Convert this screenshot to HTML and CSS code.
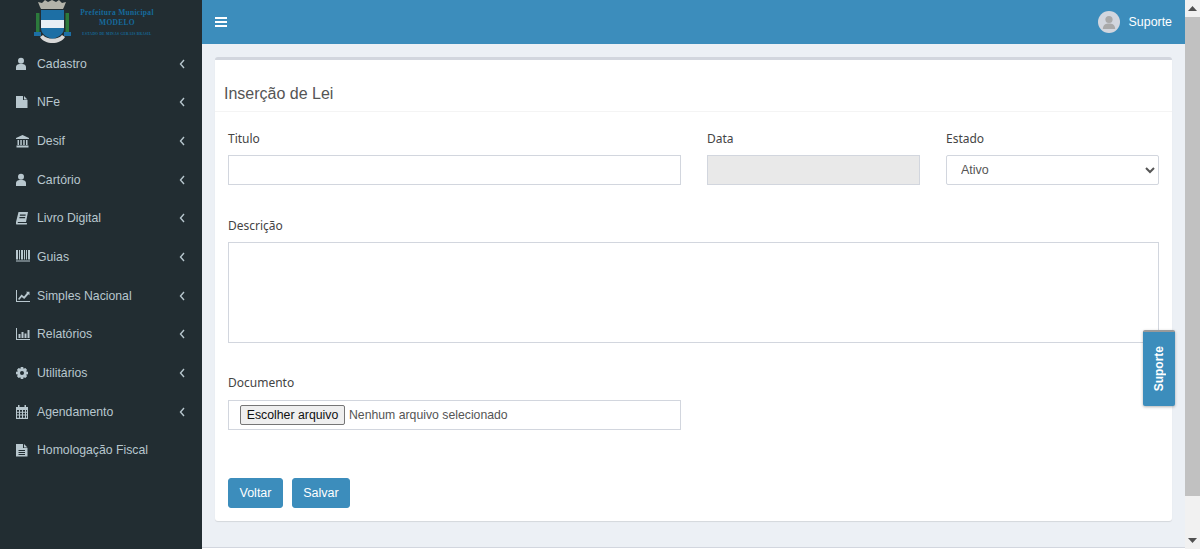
FILE: index.html
```html
<!DOCTYPE html>
<html lang="pt-BR">
<head>
<meta charset="utf-8">
<title>Inserção de Lei</title>
<link rel="stylesheet" href="styles.css">
</head>
<body>
<aside class="sidebar">
  <div class="logo">
    <svg class="crest" width="40" height="44" viewBox="0 0 40 44">
      <path d="M7 7 L5 2 L9 3 L12 0 L15 2 L19 0 L23 2 L26 0 L29 3 L33 2 L31 7 L30 9 H8 Z" fill="#b3b3aa"/>
      <path d="M3 13 h3.500 v19 h-3.500z M32.500 13 h3.500 v19 h-3.500z" fill="#2c7a3c"/>
      <path d="M1 32 h7 v4 h-7z M31 32 h7 v4 h-7z" fill="#1d6fa5"/>
      <path d="M8 10 H31 V28 C31 34 26 37 19.500 39 C13 37 8 34 8 28 Z" fill="#1d6fa5"/>
      <rect x="8" y="20" width="23" height="8" fill="#e8eef5"/>
      <path d="M7 37 C12 45 27 45 32 37 L29 35 C25 40 14 40 10 35 Z" fill="#d8d8d8"/>
    </svg>
    <div class="logo-text">
      <span class="logo-name">Prefeitura Municipal</span>
      <span class="logo-name">MODELO</span>
      <span class="logo-small">ESTADO DE MINAS GERAIS BRASIL</span>
    </div>
  </div>
  <nav class="menu">
    <a class="item"><svg class="ico" viewBox="1.500 0 14 14"><circle cx="6.500" cy="3.800" r="3"/><path d="M1.500 13 V10 C1.500 8 3.500 7 5 7 H8 C9.500 7 11.500 8 11.500 10 V13 Z"/></svg><span class="label">Cadastro</span><svg class="chev" viewBox="0 0 6 10"><path d="M5 1 L1.500 5 L5 9"/></svg></a>
    <a class="item"><svg class="ico" viewBox="0 0 14 14"><path d="M0 1 H7 V5 H11.500 V13 H0 Z M8 1 L11.500 4.500 H8 Z"/></svg><span class="label">NFe</span><svg class="chev" viewBox="0 0 6 10"><path d="M5 1 L1.500 5 L5 9"/></svg></a>
    <a class="item"><svg class="ico" viewBox="0 0 14 14"><path d="M6.500 1 L13 4 V5 H0 V4 Z M1.500 6 H3 V11 H1.500 Z M4.300 6 H5.800 V11 H4.300 Z M7.200 6 H8.700 V11 H7.200 Z M10 6 H11.500 V11 H10 Z M.5 11.500 H12.500 V13.500 H.5 Z"/></svg><span class="label">Desif</span><svg class="chev" viewBox="0 0 6 10"><path d="M5 1 L1.500 5 L5 9"/></svg></a>
    <a class="item"><svg class="ico" viewBox="1.500 0 14 14"><circle cx="6.500" cy="3.800" r="3"/><path d="M1.500 13 V10 C1.500 8 3.500 7 5 7 H8 C9.500 7 11.500 8 11.500 10 V13 Z"/></svg><span class="label">Cartório</span><svg class="chev" viewBox="0 0 6 10"><path d="M5 1 L1.500 5 L5 9"/></svg></a>
    <a class="item"><svg class="ico" viewBox="1 0 14 14"><path d="M3.500 1 H13 L11 11 H3 C2.500 11 2.500 12 3 12 H12 L11.800 13.500 H2 C1 13.500 .8 12.500 1 11 Z M5 3.500 L4.800 4.800 H10.500 L10.700 3.500 Z M4.500 6 L4.300 7.200 H10 L10.200 6 Z" fill-rule="evenodd"/></svg><span class="label">Livro Digital</span><svg class="chev" viewBox="0 0 6 10"><path d="M5 1 L1.500 5 L5 9"/></svg></a>
    <a class="item"><svg class="ico" viewBox="0 1.500 14 14"><path d="M0 0 H2 V11 H0 Z M3 0 H4 V11 H3 Z M5 0 H7 V11 H5 Z M8 0 H9 V11 H8 Z M10 0 H11 V11 H10 Z M12 0 H14 V11 H12 Z M0 12 H14 V13 H0 Z"/></svg><span class="label">Guias</span><svg class="chev" viewBox="0 0 6 10"><path d="M5 1 L1.500 5 L5 9"/></svg></a>
    <a class="item"><svg class="ico" viewBox="0 0 14 14"><path d="M0 1 H1 V12 H14 V13 H0 Z M2 10 L5.500 5.500 L8 7.500 L11 3.800 L10 2.800 H13.500 V6.300 L12.500 5.300 L8.200 10 L5.800 8 L3.200 11 Z"/></svg><span class="label">Simples Nacional</span><svg class="chev" viewBox="0 0 6 10"><path d="M5 1 L1.500 5 L5 9"/></svg></a>
    <a class="item"><svg class="ico" viewBox="0 0 14 14"><path d="M0 1 H1 V12 H14 V13 H0 Z M2.500 7 H4.500 V11 H2.500 Z M5.500 5 H7.500 V11 H5.500 Z M8.500 6.500 H10.500 V11 H8.500 Z M11.500 3 H13.500 V11 H11.500 Z"/></svg><span class="label">Relatórios</span><svg class="chev" viewBox="0 0 6 10"><path d="M5 1 L1.500 5 L5 9"/></svg></a>
    <a class="item"><svg class="ico" viewBox="1 0 14 14"><path fill-rule="evenodd" d="M5.800 1 H8.200 L8.600 2.800 L10.300 2 L12 3.700 L11.200 5.400 L13 5.800 V8.200 L11.200 8.600 L12 10.300 L10.300 12 L8.600 11.200 L8.200 13 H5.800 L5.400 11.200 L3.700 12 L2 10.300 L2.800 8.600 L1 8.200 V5.800 L2.800 5.400 L2 3.700 L3.700 2 L5.400 2.800 Z M7 5 A2 2 0 1 0 7 9 A2 2 0 1 0 7 5 Z"/></svg><span class="label">Utilitários</span><svg class="chev" viewBox="0 0 6 10"><path d="M5 1 L1.500 5 L5 9"/></svg></a>
    <a class="item"><svg class="ico" viewBox="1 0 14 14"><path fill-rule="evenodd" d="M3 0 H4.500 V2 H9.500 V0 H11 V2 H13 V14 H1 V2 H3 Z M2 5 V6.800 H4 V5 Z M5 5 V6.800 H7 V5 Z M8 5 V6.800 H10 V5 Z M11 5 V6.800 H12 V5 Z M2 7.800 V9.600 H4 V7.800 Z M5 7.800 V9.600 H7 V7.800 Z M8 7.800 V9.600 H10 V7.800 Z M11 7.800 V9.600 H12 V7.800 Z M2 10.600 V12.800 H4 V10.600 Z M5 10.600 V12.800 H7 V10.600 Z M8 10.600 V12.800 H10 V10.600 Z M11 10.600 V12.800 H12 V10.600 Z"/></svg><span class="label">Agendamento</span><svg class="chev" viewBox="0 0 6 10"><path d="M5 1 L1.500 5 L5 9"/></svg></a>
    <a class="item"><svg class="ico" viewBox="0 0 14 14"><path fill-rule="evenodd" d="M0 1 H7 V5 H11.500 V13.500 H0 Z M8 1 L11.500 4.500 H8 Z M2.500 7 V8 H9 V7 Z M2.500 9 V10 H9 V9 Z M2.500 11 V12 H9 V11 Z"/></svg><span class="label">Homologação Fiscal</span></a>
  </nav>
</aside>

<div class="main">
  <header class="topbar">
    <svg class="burger" width="12" height="10" viewBox="0 0 12 10"><path d="M0 0 H12 V2 H0 Z M0 4 H12 V6 H0 Z M0 8 H12 V10 H0 Z"/></svg>
    <div class="user">
      <svg class="avatar" width="22" height="22" viewBox="0 0 22 22"><circle cx="11" cy="11" r="11" fill="#d2d6de"/><circle cx="11" cy="8.500" r="3.600" fill="#a9a9a9"/><path d="M4.800 18 C5 13.500 8 12.500 11 12.500 C14 12.500 17 13.500 17.200 18 Z" fill="#a9a9a9"/></svg>
      <span>Suporte</span>
    </div>
  </header>
  <div class="content">
    <section class="box">
      <h1 class="box-title">Inserção de Lei</h1>
      <form class="form">
        <div class="row-top">
          <div class="field">
            <label class="field-label">Titulo</label>
            <input class="control" type="text">
          </div>
          <div class="field">
            <label class="field-label">Data</label>
            <input class="control control-off" type="text" disabled>
          </div>
          <div class="field">
            <label class="field-label">Estado</label>
            <select class="control control-select"><option>Ativo</option></select>
          </div>
        </div>
        <div class="field field-desc">
          <label class="field-label">Descrição</label>
          <textarea class="control control-area"></textarea>
        </div>
        <div class="field field-doc">
          <label class="field-label">Documento</label>
          <div class="control control-file">
            <button class="file-btn" type="button">Escolher arquivo</button>
            <span>Nenhum arquivo selecionado</span>
          </div>
        </div>
        <div class="actions">
          <button class="btn btn-back" type="button">Voltar</button>
          <button class="btn btn-save" type="button">Salvar</button>
        </div>
      </form>
    </section>
  </div>
  <footer class="footer"></footer>
  <a class="support-tab"><span>Suporte</span></a>
</div>

<div class="scrollbar">
  <div class="scroll-btn"><svg width="9" height="5" viewBox="0 0 9 5"><path d="M4.500 0 L9 5 H0 Z"/></svg></div>
  <div class="scroll-track"><div class="scroll-thumb"></div></div>
  <div class="scroll-btn"><svg width="9" height="5" viewBox="0 0 9 5"><path d="M0 0 H9 L4.500 5 Z"/></svg></div>
</div>
</body>
</html>
```

FILE: styles.css
```css
* { box-sizing: border-box; }
html, body { height: 100%; }
body {
  margin: 0;
  display: flex;
  height: 549px;
  overflow: hidden;
  background: #ecf0f5;
  font-family: "Liberation Sans", Arial, sans-serif;
  font-size: 13px;
  color: #444;
}

/* Sidebar */
.sidebar {
  width: 202px;
  flex: none;
  background: #222d32;
  display: flex;
  flex-direction: column;
}
.logo {
  height: 44px;
  display: flex;
  align-items: flex-start;
  padding-left: 33px;
  overflow: hidden;
}
.crest { flex: none; }
.logo-text {
  width: 78px;
  margin-left: 5px;
  padding-top: 8px;
  display: flex;
  flex-direction: column;
  align-items: center;
  color: #156a9c;
  font-family: "Liberation Serif", serif;
  font-weight: 700;
}
.logo-name { font-size: 7.500px; line-height: 10px; white-space: nowrap; letter-spacing: .3px; }
.logo-small { font-size: 3.500px; line-height: 5px; margin-top: 4px; white-space: nowrap; letter-spacing: .3px; }
.menu { display: flex; flex-direction: column; padding-top: .4px; }
.item {
  height: 38.660px;
  display: flex;
  align-items: center;
  padding-left: 16px;
  padding-right: 17px;
  color: #b8c7ce;
  white-space: nowrap;
  font-size: 12.250px;
}
.ico { width: 14px; height: 14px; flex: none; fill: #b8c7ce; }
.label { margin-left: 7px; flex: 1; }
.chev { width: 6px; height: 10px; flex: none; fill: none; stroke: #b8c7ce; stroke-width: 1.400; }

/* Main column */
.main {
  position: relative;
  flex: 1;
  min-width: 0;
  display: flex;
  flex-direction: column;
}
.topbar {
  height: 44px;
  flex: none;
  background: #3c8dbc;
  display: flex;
  align-items: center;
  justify-content: space-between;
  padding: 0 13px;
  color: #fff;
}
.burger { fill: #fff; }
.user { display: flex; align-items: center; gap: 9px; font-size: 12.400px; }
.content {
  flex: 1;
  padding: 13px 13px 0 13px;
}
.box {
  height: 464px;
  background: #fff;
  border-top: 3px solid #d2d6de;
  border-radius: 3px;
  box-shadow: 0 1px 1px rgba(0,0,0,.1);
}
.box-title {
  margin: 0;
  height: 52px;
  padding: 24px 0 0 9px;
  font-size: 16px;
  line-height: 20px;
  font-weight: 400;
  color: #555;
  border-bottom: 1px solid #f4f4f4;
}
.form { padding: 0 13px; }
.row-top {
  display: grid;
  grid-template-columns: 453px 213px 213px;
  column-gap: 26px;
  padding-top: 18px;
}
.field { display: flex; flex-direction: column; }
.field-label {
  height: 25px;
  font-family: "Noto Sans", "Open Sans", sans-serif;
  font-size: 12px;
  line-height: 18px;
  color: #444;
}
.control {
  display: block;
  width: 100%;
  height: 30px;
  border: 1px solid #d2d6de;
  background: #fff;
  margin: 0;
  padding: 0 14px;
  font-family: "Liberation Sans", Arial, sans-serif;
  font-size: 12.500px;
  color: #555;
  outline: none;
  border-radius: 0;
}
.control-off { background: #e9e9e9; }
.control-select { border-radius: 2px; padding: 0 10px; }
.field-desc { padding-top: 32px; }
.control-area { height: 101px; resize: none; }
.field-doc { padding-top: 31px; width: 453px; }
.field-doc .field-label { height: 26px; }
.control-file {
  display: flex;
  align-items: center;
  padding: 0 11px;
  gap: 4px;
  font-size: 12.250px;
  white-space: nowrap;
}
.file-btn {
  height: 20px;
  width: 105px;
  flex: none;
  padding: 0;
  border: 1px solid #767676;
  border-radius: 2px;
  background: #efefef;
  color: #111;
  font-family: "Liberation Sans", Arial, sans-serif;
  font-size: 12.300px;
}
.actions { display: flex; gap: 9px; padding-top: 48px; }
.btn {
  height: 30px;
  border: 1px solid #3c8dbc;
  border-radius: 3px;
  background: #3c8dbc;
  color: #fff;
  font-family: "Liberation Sans", Arial, sans-serif;
  font-size: 12.500px;
  padding: 0;
}
.btn-back { width: 55px; }
.btn-save { width: 58px; }
.footer {
  height: 2px;
  flex: none;
  border-top: 1px solid #d2d6de;
  background: #fff;
}
.support-tab {
  position: absolute;
  left: 941px;
  top: 330px;
  width: 32px;
  height: 76px;
  background: #3c8dbc;
  border-top: 2px solid #9a9a9a;
  border-radius: 2px;
  box-shadow: 0 1px 3px rgba(0,0,0,.3);
  color: #fff;
  font-weight: 700;
  font-size: 12px;
  display: flex;
  align-items: center;
  justify-content: center;
}
.support-tab span { writing-mode: vertical-rl; transform: rotate(180deg); }

/* Scrollbar */
.scrollbar {
  width: 15px;
  flex: none;
  background: #f1f1f1;
  display: flex;
  flex-direction: column;
}
.scroll-btn {
  height: 17px;
  flex: none;
  display: flex;
  align-items: center;
  justify-content: center;
  fill: #505050;
}
.scroll-track { flex: 1; }
.scroll-thumb { height: 479px; background: #c1c1c1; }
```
